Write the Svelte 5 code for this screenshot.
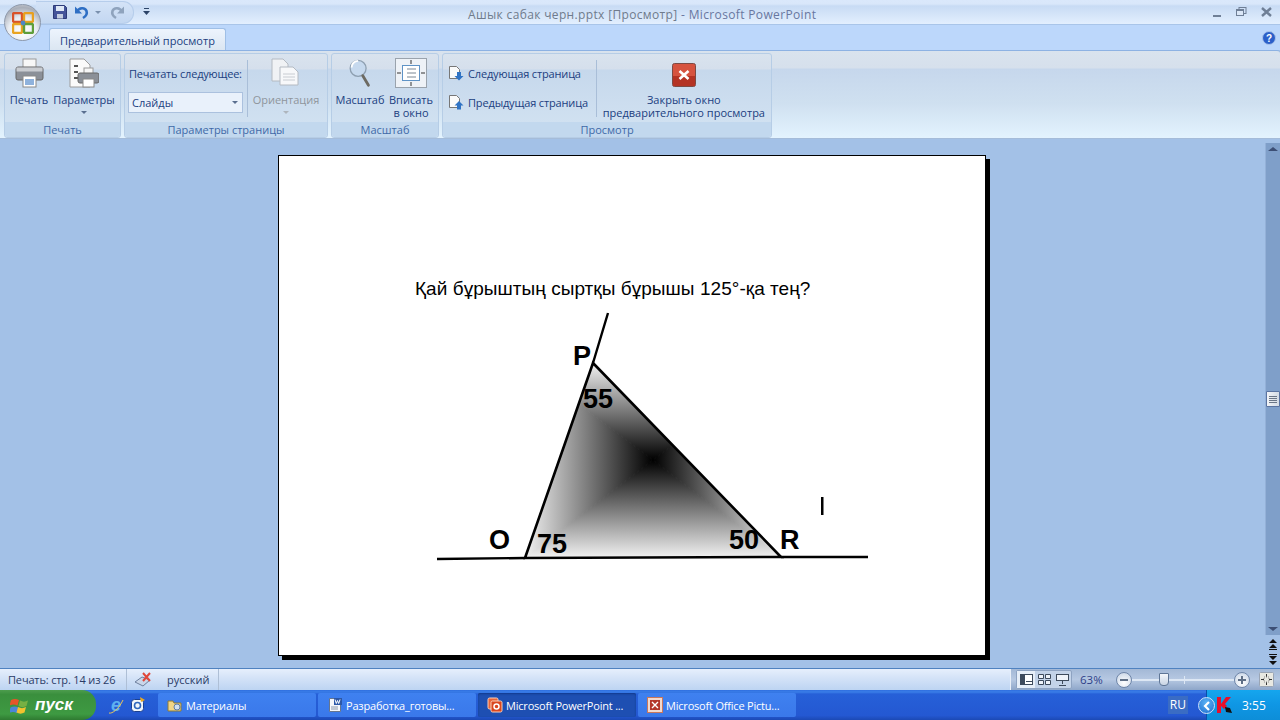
<script>
  // slide triangle is filled with a rectangular path gradient over its bounding box,
  // so four wedges meet at the box centre and the triangle clips them
  const box = { x0: 525, y0: 363, x1: 781, y1: 558 };
  const centre = [653, 460];
  const wedges = [
    { id: "wTop", to: [centre[0], box.y0], pts: [[box.x0, box.y0], [box.x1, box.y0]] },
    { id: "wRight", to: [box.x1, centre[1]], pts: [[box.x1, box.y0], [box.x1, box.y1]] },
    { id: "wBottom", to: [centre[0], box.y1], pts: [[box.x1, box.y1], [box.x0, box.y1]] },
    { id: "wLeft", to: [box.x0, centre[1]], pts: [[box.x0, box.y1], [box.x0, box.y0]] }
  ];

  const tasks = [
    { label: "Материалы", icon: "folder" },
    { label: "Разработка_готовы...", icon: "word" },
    { label: "Microsoft PowerPoint ...", icon: "ppt", active: true },
    { label: "Microsoft Office Pictu...", icon: "pic" }
  ];
</script>

<div class="window">
  <header class="titlebar">
    <div class="orb">
      <svg width="22" height="22" viewBox="0 0 22 22">
        <rect x="1" y="1" width="9" height="9" rx="1.5" fill="none" stroke="#d8532a" stroke-width="2.4" />
        <rect x="12" y="1" width="9" height="9" rx="1.5" fill="none" stroke="#e8a020" stroke-width="2.4" />
        <rect x="1" y="12" width="9" height="9" rx="1.5" fill="none" stroke="#e9a422" stroke-width="2.4" />
        <rect x="12" y="12" width="9" height="9" rx="1.5" fill="none" stroke="#5f9e3a" stroke-width="2.4" />
        <circle cx="11" cy="11" r="2.4" fill="#4d86c6" />
      </svg>
    </div>
    <div class="qat">
      <svg width="16" height="16" viewBox="0 0 16 16">
        <path d="M1.500 1.500h11l2 2v11h-13z" fill="#44549a" stroke="#2c3a78" />
        <rect x="4" y="2" width="8" height="5" fill="#dfe8f6" />
        <rect x="5" y="10" width="6" height="4.500" fill="#c3cde0" />
      </svg>
      <svg width="16" height="16" viewBox="0 0 16 16">
        <path d="M3 7.500C5 3.500 11 3 12.500 7c1 3-1 5.500-3.500 7" fill="none" stroke="#2f6fc4" stroke-width="2.600" />
        <path d="M1 2.500v7h7z" fill="#2f6fc4" />
      </svg>
      <span class="tiny-arrow"></span>
      <svg width="16" height="16" viewBox="0 0 16 16">
        <path d="M13 7.500C11 3.500 5 3 3.500 7c-1 3 1 5.500 3.500 7" fill="none" stroke="#8fa3bd" stroke-width="2.600" />
        <path d="M15 2.500v7H8z" fill="#8fa3bd" />
      </svg>
    </div>
    <svg class="qat-more" width="7" height="8" viewBox="0 0 7 8">
      <rect x="1" y="0" width="5" height="1" fill="#2c4468" />
      <path d="M0 3h7L3.500 7z" fill="#2c4468" />
    </svg>
    <div class="title">Ашык сабак черн.pptx [Просмотр] <span>- Microsoft PowerPoint</span></div>
    <div class="winbtns">
      <svg class="win-min" width="9" height="4" viewBox="0 0 9 4"><rect y="1" width="8" height="2" fill="#6f7f96" /></svg>
      <svg width="11" height="10" viewBox="0 0 11 10">
        <rect x="3" y="0.500" width="7" height="6" fill="none" stroke="#6f7f96" />
        <rect x="0.500" y="2.500" width="7" height="6" fill="#dbe7f7" stroke="#6f7f96" />
        <rect x="0" y="2" width="8" height="2" fill="#6f7f96" />
      </svg>
      <svg width="11" height="10" viewBox="0 0 11 10">
        <path d="M1 1l9 8M10 1l-9 8" stroke="#6f7f96" stroke-width="2.400" />
      </svg>
    </div>
  </header>

  <nav class="tabrow">
    <div class="tab">Предварительный просмотр</div>
    <svg class="help" width="14" height="14" viewBox="0 0 14 14">
      <circle cx="7" cy="7" r="6.500" fill="#2b5fc9" stroke="#a9c3ea" />
      <text x="7" y="11" text-anchor="middle" class="help-mark">?</text>
    </svg>
  </nav>

  <section class="ribbon">
    <div class="group g1">
      <div class="group-body">
        <div class="big b-print">
          <svg width="30" height="30" viewBox="0 0 30 30">
            <rect x="9" y="1" width="13" height="9" fill="#f7f7f7" stroke="#9a9a9a" />
            <rect x="2" y="9" width="27" height="13" rx="2" fill="#8b9098" stroke="#666" />
            <rect x="2.500" y="9.500" width="26" height="4" fill="#c9ccd1" />
            <rect x="9" y="18" width="13" height="11" fill="#fff" stroke="#8a8a8a" />
            <rect x="11" y="21" width="9" height="6" fill="#8fb2dc" />
          </svg>
          <span>Печать</span>
        </div>
        <div class="big b-params">
          <svg width="30" height="30" viewBox="0 0 30 30">
            <path d="M1 1h14l6 6v22H1z" fill="#fafafa" stroke="#9c9c9c" />
            <path d="M5 8h4M5 14h4M5 20h4" stroke="#555" stroke-width="2" />
            <rect x="15" y="10" width="9" height="6" fill="#f7f7f7" stroke="#9a9a9a" />
            <rect x="9" y="15" width="21" height="10" rx="2" fill="#8b9098" stroke="#666" />
            <rect x="14" y="21" width="11" height="8" fill="#fff" stroke="#8a8a8a" />
          </svg>
          <span>Параметры</span>
          <i class="drop"></i>
        </div>
      </div>
      <footer>Печать</footer>
    </div>

    <div class="group g2">
      <div class="group-body">
        <div class="slides">
          <span class="caption">Печатать следующее:</span>
          <div class="combo"><span>Слайды</span><i class="drop"></i></div>
        </div>
        <div class="sep"></div>
        <div class="big disabled b-orient">
          <svg width="30" height="30" viewBox="0 0 30 30">
            <path d="M1 1h11l5 5v17H1z" fill="#f0f2f5" stroke="#b4bac2" />
            <path d="M9 9h13l5 5v13H9z" fill="#f7f8fa" stroke="#b4bac2" />
            <path d="M12 16h12M12 19h12M12 22h12" stroke="#c8ccd2" />
          </svg>
          <span>Ориентация</span>
          <i class="drop"></i>
        </div>
      </div>
      <footer>Параметры страницы</footer>
    </div>

    <div class="group g3">
      <div class="group-body">
        <div class="big b-zoom">
          <svg width="24" height="32" viewBox="0 0 24 32">
            <circle cx="10" cy="11" r="8.500" fill="#c6d9ee" stroke="#8e9fb0" stroke-width="1.400" />
            <path d="M3 10a7 7 0 0 1 7-7" stroke="#fff" stroke-width="2" fill="none" />
            <path d="M15 19l6 10" stroke="#6d6a62" stroke-width="3" stroke-linecap="round" />
          </svg>
          <span>Масштаб</span>
        </div>
        <div class="big b-fit">
          <svg width="32" height="30" viewBox="0 0 32 30">
            <rect x="0.500" y="0.500" width="31" height="29" fill="#eef2f7" stroke="#9aa3ad" />
            <rect x="7.500" y="7.500" width="17" height="15" fill="#fff" stroke="#5f93c6" />
            <path d="M12 11h9M12 15h9M12 19h9" stroke="#7b8794" />
            <path d="M16 2v4M16 24v4M2 15h4M26 15h4" stroke="#333" />
          </svg>
          <span>Вписать<br />в окно</span>
        </div>
      </div>
      <footer>Масштаб</footer>
    </div>

    <div class="group g4">
      <div class="group-body">
        <div class="pager">
          <div class="pager-row">
            <svg width="16" height="16" viewBox="0 0 16 16">
              <path d="M1.500 1.500h7l3 3v9h-10z" fill="#fafafa" stroke="#777" />
              <path d="M9 7h4v4h2.500L11 15.500 6.500 11H9z" fill="#2f73c4" />
            </svg>
            <span>Следующая страница</span>
          </div>
          <div class="pager-row">
            <svg width="16" height="16" viewBox="0 0 16 16">
              <path d="M1.500 1.500h7l3 3v9h-10z" fill="#fafafa" stroke="#777" />
              <path d="M9 15.500h4v-4h2.500L11 7l-4.500 4.500H9z" fill="#2f73c4" />
            </svg>
            <span>Предыдущая страница</span>
          </div>
        </div>
        <div class="sep"></div>
        <div class="big b-close">
          <svg width="24" height="24" viewBox="0 0 24 24">
            <rect x="0.500" y="0.500" width="23" height="23" rx="2" fill="#d6533f" stroke="#7d4a44" />
            <rect x="1" y="13" width="22" height="10" fill="#b43324" />
            <path d="M7.500 8l9 8M16.500 8l-9 8" stroke="#fff" stroke-width="2.600" />
          </svg>
          <span>Закрыть окно<br />предварительного просмотра</span>
        </div>
      </div>
      <footer>Просмотр</footer>
    </div>
  </section>

  <main class="workarea">
    <div class="canvas">
      <div class="sheet">
        <svg class="slide" width="706" height="499" viewBox="279 156 706 499">
          <defs>
            <clipPath id="triClip"><path d="M593 363L525 558L781 557Z" /></clipPath>
            {#each wedges as w}
              <linearGradient id={w.id} gradientUnits="userSpaceOnUse" x1={centre[0]} y1={centre[1]} x2={w.to[0]} y2={w.to[1]}>
                <stop offset="0" stop-color="#000" />
                <stop offset="1" stop-color="#f2f2f2" />
              </linearGradient>
            {/each}
          </defs>
          <g clip-path="url(#triClip)">
            {#each wedges as w}
              <polygon
                points="{centre[0]},{centre[1]} {w.pts[0][0]},{w.pts[0][1]} {w.pts[1][0]},{w.pts[1][1]}"
                fill="url(#{w.id})"
                stroke="url(#{w.id})"
                stroke-width="1"
              />
            {/each}
          </g>
          <path d="M593 363L525 558L781 557Z" fill="none" stroke="#000" stroke-width="2.600" stroke-linejoin="miter" />
          <path d="M608 313L593 363M437 559L525 558M781 557L868 557" fill="none" stroke="#000" stroke-width="2.400" />
          <rect x="821" y="497" width="2.500" height="18" fill="#000" />
          <text class="question" x="415" y="295">Қай бұрыштың сыртқы бұрышы 125°-қа тең?</text>
          <text class="lbl" x="573" y="365">P</text>
          <text class="lbl" x="583" y="408">55</text>
          <text class="lbl" x="489" y="549">O</text>
          <text class="lbl" x="537" y="553">75</text>
          <text class="lbl" x="729" y="549">50</text>
          <text class="lbl" x="780" y="549">R</text>
        </svg>
      </div>
    </div>
    <aside class="scroller">
      <div class="track">
        <i class="up"></i>
        <div class="thumb"><b></b><b></b><b></b><b></b></div>
        <i class="down"></i>
      </div>
      <div class="pagebtns">
        <svg width="10" height="26" viewBox="0 0 10 26">
          <path d="M5 0l4 4H1zM5 5l4 4H1z" fill="#111" />
          <path d="M1 17h8l-4 4zM1 22h8l-4 4z" fill="#111" />
          <rect x="1" y="10" width="8" height="1" fill="#111" />
          <rect x="1" y="15" width="8" height="1" fill="#111" />
        </svg>
      </div>
    </aside>
  </main>

  <footer class="statusbar">
    <div class="status-left">
      <span class="st-page">Печать: стр. 14 из 26</span>
      <span class="st-spell">
        <svg width="18" height="16" viewBox="0 0 18 16">
          <path d="M1 10l7-5 8 3-7 6z" fill="#c9d6ea" stroke="#6d7f9d" />
          <path d="M9 1l7 8M16 1L9 9" stroke="#e0473a" stroke-width="2" />
        </svg>
      </span>
      <span class="st-lang">русский</span>
    </div>
    <div class="status-right">
      <div class="views">
        <span class="view on">
          <svg width="13" height="11" viewBox="0 0 13 11"><rect x="0.500" y="0.500" width="12" height="10" fill="#fff" stroke="#3d4a5c" /><rect x="1" y="1" width="4" height="9" fill="#3d4a5c" /><rect x="6" y="7" width="6" height="1" fill="#3d4a5c" /></svg>
        </span>
        <span class="view">
          <svg width="13" height="11" viewBox="0 0 13 11"><path d="M.5.500h5v4h-5zM7.500.500h5v4h-5zM.5 6.500h5v4h-5zM7.500 6.500h5v4h-5z" fill="#eef3fa" stroke="#3d4a5c" /></svg>
        </span>
        <span class="view">
          <svg width="13" height="12" viewBox="0 0 13 12"><rect x="0.500" y="0.500" width="12" height="6" fill="#eef3fa" stroke="#3d4a5c" /><path d="M6.500 7v3M3 11.500h7" stroke="#3d4a5c" /></svg>
        </span>
      </div>
      <span class="pct">63%</span>
      <span class="zoombtn"><i></i></span>
      <div class="slider">
        <span class="knob"></span>
        <span class="tick"></span>
      </div>
      <span class="zoombtn plus"><i></i></span>
      <svg class="fitbtn" width="15" height="15" viewBox="0 0 15 15">
        <rect x="0.500" y="0.500" width="14" height="14" rx="1" fill="#e8e8e2" stroke="#9aa5b5" />
        <path d="M7.500 2v3M7.500 10v3M2 7.500h3M10 7.500h3" stroke="#333" />
        <rect x="5" y="5" width="5" height="5" fill="none" stroke="#888" stroke-dasharray="1 1" />
      </svg>
    </div>
  </footer>

  <div class="taskbar">
    <button class="start">
      <svg width="20" height="19" viewBox="0 0 20 19">
        <path d="M1 4c3-1.500 5-1.500 8 0l-1.500 5.500c-3-1.500-5-1.500-8 0z" fill="#e5552a" />
        <path d="M10 4.500c3 1.500 5 1.500 8 0l-1.500 5.500c-3 1.500-5 1.500-8 0z" fill="#76b043" />
        <path d="M-.5 10.500c3-1.500 5-1.500 8 0L6 16c-3-1.500-5-1.500-8 0z" fill="#4a86d8" transform="translate(1 1)" />
        <path d="M8 11c3 1.500 5 1.500 8 0l-1.500 5.500c-3 1.500-5 1.500-8 0z" fill="#f3c22e" />
      </svg>
      <span>пуск</span>
    </button>
    <div class="quick">
      <svg width="16" height="24" viewBox="0 0 16 24">
        <text x="8" y="18" text-anchor="middle" class="ie-mark">e</text>
        <path d="M1 20c3 1 10-4 14-13" fill="none" stroke="#e8c65a" stroke-width="1" />
      </svg>
      <svg width="16" height="16" viewBox="0 0 16 16">
        <rect x="1.500" y="2.500" width="12" height="12" rx="3" fill="#f2f6fb" stroke="#1b3f8f" />
        <circle cx="7.500" cy="8.500" r="3" fill="none" stroke="#2e66bd" stroke-width="1.600" />
        <path d="M10 0l5 3-4 2z" fill="#e9a822" />
      </svg>
    </div>
    <div class="tasks">
      {#each tasks as t}
        <div class="task" class:active={t.active}>
          {#if t.icon === "folder"}
            <svg width="16" height="15" viewBox="0 0 16 15">
              <path d="M1 3h5l1 2h7v8H1z" fill="#f0d586" stroke="#8b7a3b" />
              <circle cx="10" cy="9" r="3" fill="#cfe0f2" stroke="#5d7ba6" />
            </svg>
          {:else if t.icon === "word"}
            <svg width="16" height="16" viewBox="0 0 16 16">
              <path d="M2.500 1.500h8l3 3v10h-11z" fill="#f4f6fb" stroke="#66758e" />
              <rect x="7" y="1" width="8" height="7" fill="#2b57a8" />
              <path d="M8 2.500l1.300 4 1.200-3 1.200 3 1.300-4" stroke="#fff" fill="none" />
              <path d="M4 10h7M4 12h7" stroke="#8a96aa" />
            </svg>
          {:else if t.icon === "ppt"}
            <svg width="16" height="16" viewBox="0 0 16 16">
              <rect x="1" y="1" width="10" height="11" rx="1.500" fill="#e8653a" stroke="#fbd0b8" />
              <rect x="4" y="4" width="11" height="11" rx="1.500" fill="#d9471f" stroke="#fbd0b8" />
              <circle cx="9.500" cy="9.500" r="2.500" fill="none" stroke="#fff" stroke-width="1.500" />
            </svg>
          {:else}
            <svg width="16" height="16" viewBox="0 0 16 16">
              <rect x="0.500" y="0.500" width="15" height="15" fill="#f3d9ce" stroke="#c9775c" />
              <rect x="3" y="3" width="10" height="10" fill="#b3362a" />
              <path d="M5 5l6 6M11 5l-6 6" stroke="#fff" stroke-width="1.400" />
            </svg>
          {/if}
          <span>{t.label}</span>
        </div>
      {/each}
    </div>
    <div class="lang-box"><span>RU</span></div>
    <div class="tray">
      <span class="chev">
        <svg width="9" height="10" viewBox="0 0 9 10"><path d="M7 1L3 5l4 4" fill="none" stroke="#fff" stroke-width="2.200" /></svg>
      </span>
      <svg class="kav" width="17" height="18" viewBox="0 0 17 18">
        <path d="M1 1h4v7l5-7h5L9 8l2 2-3 3-3-3v7H1z" fill="#e8102a" />
        <path d="M9 11l5 1 2 5-6-1z" fill="#111" />
      </svg>
      <span class="clock">3:55</span>
    </div>
  </div>
</div>

<style>
  :global(body) {
    margin: 0;
    overflow: hidden;
  }
  .window {
    width: 1280px;
    height: 720px;
    display: flex;
    flex-direction: column;
    font-family: "Open Sans", "Noto Sans", sans-serif;
    font-size: 11px;
    color: #20407f;
    background: #a3c1e7;
    position: relative;
  }

  /* title bar */
  .titlebar {
    height: 25px;
    flex: none;
    box-sizing: border-box;
    display: flex;
    align-items: center;
    background: linear-gradient(#dae8fb 0, #d9e7fa 4px, #c8dbf4 6px, #e3effe 100%);
    border-bottom: 1px solid #a9c5e9;
    position: relative;
  }
  .orb {
    position: absolute;
    left: 4px;
    top: 4px;
    width: 37px;
    height: 37px;
    border-radius: 50%;
    background: radial-gradient(circle at 50% 75%, #fff 0, #e8ecf2 45%, #a9aeb8 75%, #d8dbe0 100%);
    border: 1px solid #8e99ab;
    box-sizing: border-box;
    display: flex;
    align-items: center;
    justify-content: center;
    z-index: 2;
  }
  .qat {
    margin-left: 36px;
    padding-left: 16px;
    width: 81px;
    height: 21px;
    display: flex;
    align-items: center;
    gap: 6px;
    border-radius: 0 11px 11px 0;
    background: linear-gradient(#d4e3f7, #c3d7f1);
    border: 1px solid #b6cdeb;
    border-left: none;
  }
  .tiny-arrow {
    width: 0;
    height: 0;
    margin: 0 2px 0 -1px;
    border: 3px solid transparent;
    border-top: 3px solid #7a90ad;
    border-bottom: 0;
  }
  .qat-more {
    margin-left: 9px;
  }
  .title {
    position: absolute;
    left: 468px;
    top: 7px;
    font-size: 12px;
    line-height: 15px;
    letter-spacing: 0.35px;
    color: #6f7b8c;
    white-space: nowrap;
  }
  .title span {
    color: #68779f;
  }
  .winbtns {
    margin-left: auto;
    margin-right: 8px;
    display: flex;
    align-items: center;
    gap: 14px;
  }
  .win-min {
    margin-top: 7px;
  }

  /* tab row */
  .tabrow {
    height: 25px;
    flex: none;
    display: flex;
    align-items: flex-end;
    background: #bcd7fb;
    position: relative;
  }
  .tab {
    margin-left: 49px;
    width: 177px;
    height: 22px;
    line-height: 23px;
    text-align: center;
    border: 1px solid #9fbfe6;
    border-bottom: none;
    border-radius: 3px 3px 0 0;
    background: linear-gradient(#edf4fd, #dbe6f2);
    color: #20407f;
    box-sizing: border-box;
  }
  .help {
    position: absolute;
    right: 4px;
    top: 6px;
  }
  .help-mark {
    font: bold 10px "Liberation Sans", sans-serif;
    fill: #fff;
  }

  /* ribbon */
  .ribbon {
    height: 88px;
    flex: none;
    box-sizing: border-box;
    padding: 2px 3px 2px 4px;
    display: flex;
    gap: 3px;
    border-top: 1px solid #8db2e3;
    border-radius: 0 3px 0 0;
    background: linear-gradient(#d9e3ee 0, #d6e0ec 17px, #c6d7ec 18px, #cfe0f0 60%, #e3f3fe 100%);
    box-shadow: 0 1px 0 #a5bcd9;
  }
  .group {
    box-sizing: border-box;
    height: 85px;
    display: flex;
    flex-direction: column;
    border: 1px solid #b6cde6;
    border-radius: 3px;
    background: linear-gradient(#d9e3ee 0, #d5dfec 15px, #c6d8ec 16px, #d3e3f2 100%);
  }
  .group-body {
    flex: 1;
    display: flex;
    min-height: 0;
  }
  .group footer {
    height: 15px;
    line-height: 15px;
    text-align: center;
    background: #c2d8ee;
    color: #3f6aa8;
    border-radius: 0 0 3px 3px;
  }
  .g1 { width: 117px; }
  .g2 { width: 204px; }
  .g3 { width: 108px; }
  .g4 { width: 330px; }

  .big {
    display: flex;
    flex-direction: column;
    align-items: center;
    line-height: 13px;
    text-align: center;
    white-space: nowrap;
    padding-top: 4px;
  }
  .big svg {
    height: 30px;
    margin-bottom: 5px;
  }
  .big .drop {
    margin-top: 5px;
  }
  .b-print { margin-left: 4px; width: 40px; }
  .b-params { margin-left: 4px; width: 62px; }
  .b-orient { margin-left: 3px; width: 70px; }
  .b-zoom { margin-left: 3px; width: 50px; }
  .b-fit { margin-left: 2px; width: 48px; }
  .b-close { margin-left: 2px; width: 170px; padding-top: 9px; }
  .b-close svg { height: 24px; margin-bottom: 6px; }
  .disabled {
    color: #8f959c;
  }
  .drop {
    display: block;
    width: 0;
    height: 0;
    border: 3px solid transparent;
    border-top: 3px solid #5a6f8f;
    border-bottom: 0;
  }
  .disabled .drop {
    border-top-color: #aeb5bd;
  }
  .slides {
    margin: 12px 0 0 3px;
    width: 115px;
    display: flex;
    flex-direction: column;
    gap: 11px;
  }
  .caption {
    padding-left: 1px;
    line-height: 15px;
    white-space: nowrap;
    letter-spacing: -0.2px;
  }
  .combo {
    height: 21px;
    display: flex;
    align-items: center;
    justify-content: space-between;
    padding: 0 4px 0 3px;
    box-sizing: border-box;
    background: #e9f1fb;
    border: 1px solid #abc1de;
    color: #20407f;
  }
  .sep {
    width: 1px;
    margin: 6px 0 5px 4px;
    background: #a9bed8;
  }
  .g4 .sep {
    margin-left: 8px;
  }
  .pager {
    margin: 11px 0 0 5px;
    display: flex;
    flex-direction: column;
    gap: 13px;
  }
  .pager-row {
    display: flex;
    align-items: center;
    gap: 4px;
    height: 16px;
    white-space: nowrap;
    letter-spacing: -0.15px;
  }

  /* work area */
  .workarea {
    flex: 1;
    min-height: 0;
    display: flex;
  }
  .canvas {
    flex: 1;
    display: flex;
    justify-content: center;
    padding: 17px 1px 0 0;
    box-sizing: border-box;
  }
  .sheet {
    width: 708px;
    height: 501px;
    background: #fff;
    border: 1px solid #000;
    box-shadow: 4px 4px 0 #000;
    box-sizing: border-box;
  }
  .slide {
    display: block;
    font-family: "Liberation Sans", Arial, sans-serif;
  }
  .question {
    font-size: 19px;
    letter-spacing: 0.05px;
    fill: #000;
  }
  .lbl {
    font-size: 27px;
    font-weight: bold;
    fill: #000;
  }
  .scroller {
    width: 15px;
    display: flex;
    flex-direction: column;
  }
  .track {
    margin-top: 5px;
    height: 494px;
    background: #7f9fc9;
    border-left: 1px solid #94b1d8;
    box-sizing: border-box;
    display: flex;
    flex-direction: column;
    align-items: center;
    position: relative;
  }
  .up,
  .down {
    width: 0;
    height: 0;
    border: 5px solid transparent;
    position: absolute;
    left: 2px;
  }
  .up {
    top: 4px;
    border-top: 0;
    border-bottom: 4px solid #3c4e74;
  }
  .down {
    bottom: 4px;
    border-bottom: 0;
    border-top: 4px solid #3c4e74;
  }
  .thumb {
    margin-top: 248px;
    width: 14px;
    height: 16px;
    box-sizing: border-box;
    background: linear-gradient(90deg, #f2f4f7, #d4dbe4);
    border: 1px solid #5b74a1;
    border-radius: 1px;
    display: flex;
    flex-direction: column;
    align-items: center;
    justify-content: center;
    gap: 1px;
  }
  .thumb b {
    display: block;
    width: 8px;
    height: 1px;
    background: #6b7686;
  }
  .pagebtns {
    padding: 4px 0 0 3px;
  }

  /* status bar */
  .statusbar {
    height: 22px;
    flex: none;
    display: flex;
    border-top: 1px solid #4f82c0;
    box-sizing: border-box;
    color: #2a3b66;
  }
  .status-left {
    width: 1010px;
    display: flex;
    align-items: center;
    background: linear-gradient(#e6effc, #d3e2f7 45%, #bdd4f2 100%);
  }
  .st-page {
    width: 127px;
    padding-left: 8px;
    box-sizing: border-box;
    border-right: 1px solid #aebfd6;
    line-height: 21px;
    white-space: nowrap;
    letter-spacing: -0.15px;
  }
  .st-spell {
    width: 40px;
    display: flex;
    padding-left: 7px;
    box-sizing: border-box;
  }
  .st-lang {
    width: 51px;
    line-height: 21px;
    border-right: 1px solid #aebfd6;
    box-sizing: content-box;
  }
  .status-right {
    flex: 1;
    display: flex;
    align-items: center;
    padding-left: 5px;
    background: linear-gradient(#a3b8d6, #b6c8e2 50%, #8ea6c9 100%);
    border-left: 1px solid #e8eff9;
  }
  .views {
    display: flex;
    height: 17px;
    border: 1px solid #8ea3c2;
    border-radius: 2px;
    background: #c3d3e9;
  }
  .view {
    width: 18px;
    display: flex;
    align-items: center;
    justify-content: center;
  }
  .view.on {
    background: #e6eef8;
  }
  .pct {
    margin-left: 8px;
    width: 36px;
    font-size: 11.500px;
    color: #2e3f88;
  }
  .zoombtn {
    width: 16px;
    height: 16px;
    box-sizing: border-box;
    border-radius: 50%;
    border: 1px solid #6f86a9;
    background: radial-gradient(circle at 50% 70%, #fff, #c5d2e4);
    display: flex;
    align-items: center;
    justify-content: center;
    position: relative;
    flex: none;
  }
  .zoombtn i {
    width: 8px;
    height: 2px;
    background: #5f6f86;
  }
  .plus i::after {
    content: "";
    display: block;
    width: 2px;
    height: 8px;
    margin: -3px 0 0 3px;
    background: #5f6f86;
  }
  .slider {
    flex: none;
    width: 102px;
    height: 2px;
    background: #dde7f4;
    position: relative;
  }
  .knob {
    position: absolute;
    left: 27px;
    top: -6px;
    width: 8px;
    height: 11px;
    background: linear-gradient(#f4f7fb, #c8d4e4);
    border: 1px solid #5f7696;
    border-radius: 1px 1px 4px 4px;
  }
  .tick {
    position: absolute;
    left: 52px;
    top: -3px;
    width: 1px;
    height: 8px;
    background: #dde7f4;
  }
  .fitbtn {
    margin-left: 9px;
  }

  /* taskbar */
  .taskbar {
    height: 30px;
    flex: none;
    display: flex;
    align-items: stretch;
    background: linear-gradient(#2f6fe0 0, #3a7ee8 2px, #2660d8 4px, #2458d2 85%, #1c49b5 100%);
    color: #fff;
  }
  .start {
    width: 96px;
    padding: 0 0 0 10px;
    border: none;
    border-radius: 0 14px 14px 0;
    background: linear-gradient(#4d9d4d 0, #3a8f3d 15%, #3e9a42 80%, #2f7a31 100%);
    display: flex;
    align-items: center;
    gap: 5px;
    box-sizing: border-box;
    font: italic bold 17px "Liberation Sans", Arial, sans-serif;
    color: #fff;
  }
  .quick {
    width: 62px;
    padding-left: 12px;
    box-sizing: border-box;
    display: flex;
    align-items: center;
    gap: 6px;
  }
  .ie-mark {
    font: italic bold 18px "Liberation Sans", sans-serif;
    fill: #5db0f0;
  }
  .tasks {
    display: flex;
    gap: 2px;
    padding: 3px 0;
  }
  .task {
    width: 158px;
    box-sizing: border-box;
    padding-left: 9px;
    display: flex;
    align-items: center;
    gap: 3px;
    background: linear-gradient(#3f81f0, #3a78ea);
    border-radius: 2px;
    white-space: nowrap;
    overflow: hidden;
    letter-spacing: -0.2px;
  }
  .task.active {
    background: #1e4fb2;
    box-shadow: inset 0 1px 2px #123a8c;
  }
  .lang-box {
    margin-left: auto;
    display: flex;
    align-items: center;
  }
  .lang-box span {
    margin-right: 18px;
    padding: 2px;
    font-size: 12px;
    line-height: 14px;
    background: #3a6cc4;
  }
  .tray {
    width: 74px;
    box-sizing: border-box;
    display: flex;
    align-items: center;
    background: linear-gradient(#15a6ee, #0f96e4 50%, #0d8ed8);
    border-left: 1px solid #0a4fa8;
    position: relative;
  }
  .chev {
    position: absolute;
    left: -9px;
    top: 7px;
    width: 17px;
    height: 17px;
    border-radius: 50%;
    background: radial-gradient(circle at 50% 30%, #5ab2f5, #1f6fd0);
    border: 1px solid #cfe3fa;
    box-sizing: border-box;
    display: flex;
    align-items: center;
    justify-content: center;
  }
  .kav {
    margin-left: 9px;
  }
  .clock {
    margin-left: 9px;
    font-size: 12px;
  }
</style>
